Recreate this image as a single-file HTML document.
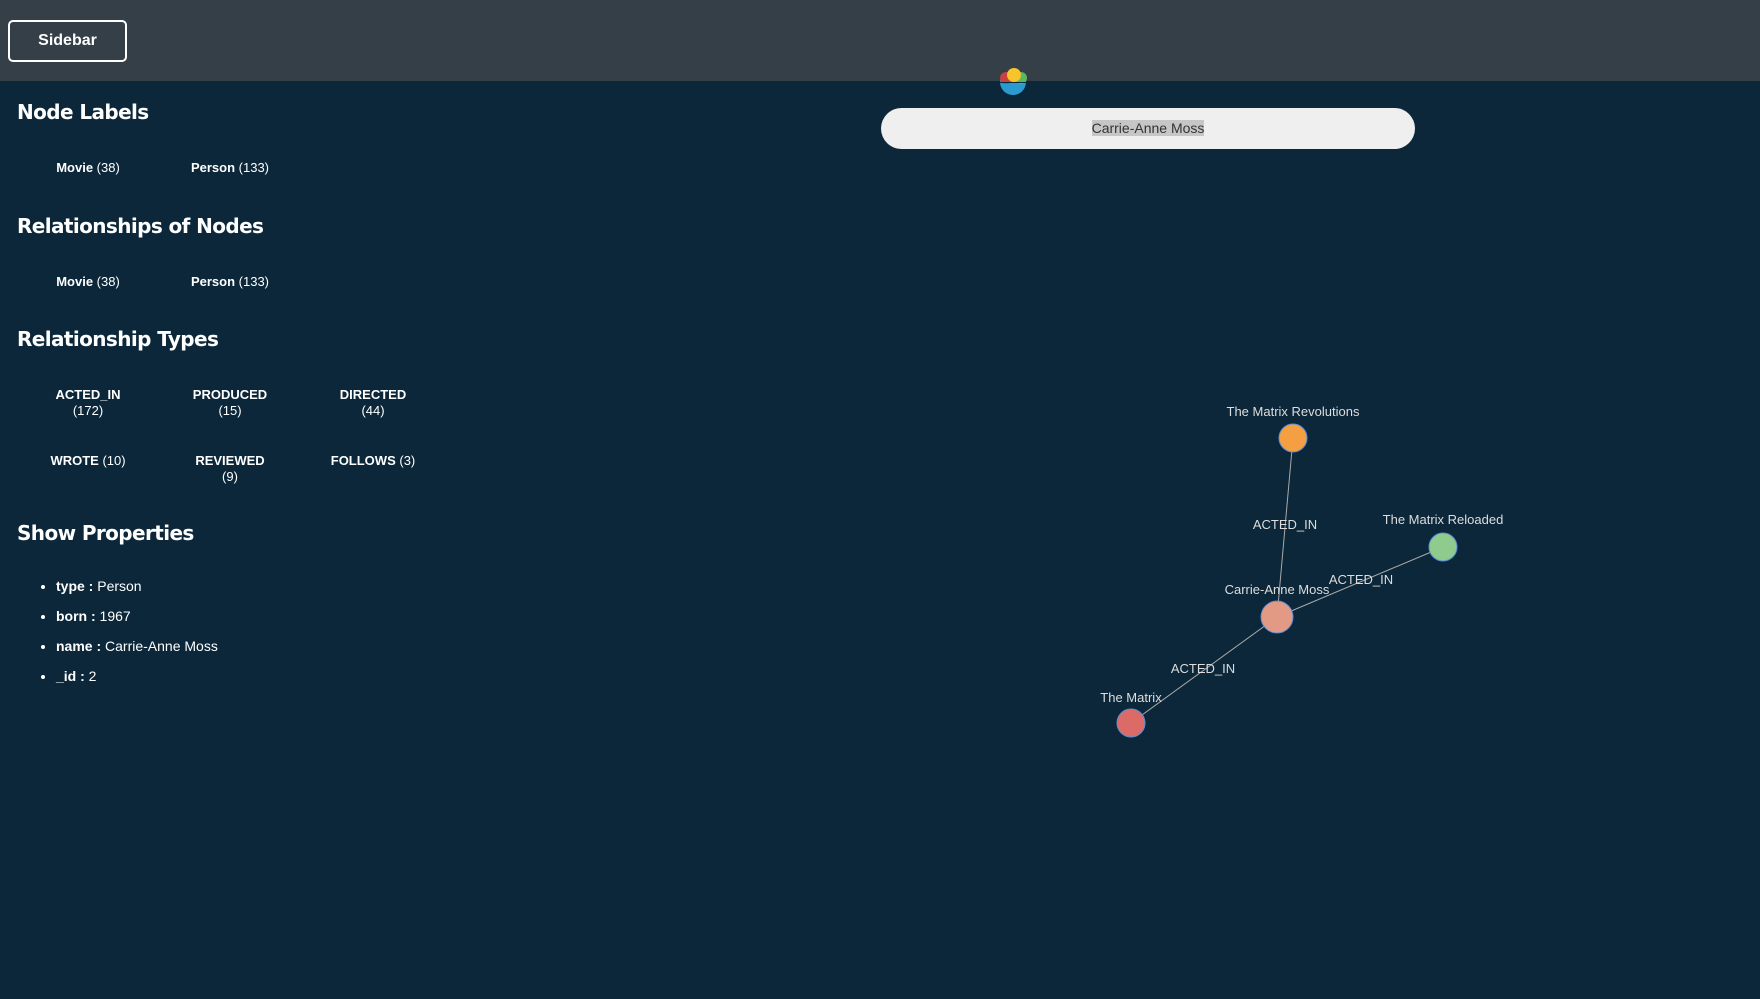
<!DOCTYPE html>
<html><head><meta charset="utf-8"><style>
body{margin:0;width:1760px;height:999px;background:#0b2739;font-family:"Liberation Sans",sans-serif;color:#fff;position:relative;overflow:hidden}
.hdr{position:absolute;left:0;top:0;width:1760px;height:81px;background:#343f48}
.btn{position:absolute;left:8px;top:20px;width:115px;height:38px;border:2px solid #fff;border-radius:5px;font-weight:bold;font-size:16px;line-height:38px;text-align:center}
h2{position:absolute;left:17px;margin:0;font-size:20px;font-weight:bold;font-family:"DejaVu Sans","Liberation Sans",sans-serif;letter-spacing:-0.6px}
.c{position:absolute;width:140px;text-align:center;font-size:13px;font-weight:bold;line-height:16px}
.c span{font-weight:normal}
ul{position:absolute;left:38px;top:571px;margin:0;padding-left:18px;font-size:14px;line-height:30px}
.search{position:absolute;left:881px;top:108px;width:534px;height:41px;border-radius:21px;background:#efefef;text-align:center;line-height:41px;font-size:14px;color:#333}
.search span{background:#c6c6c6}
</style></head><body>
<div class="hdr"></div>
<div class="btn">Sidebar</div>
<svg style="position:absolute;left:998px;top:66px" width="30" height="32">
<circle cx="15" cy="16" r="13" fill="#2a9ad0"/>
<rect x="0" y="0" width="30" height="14" fill="#343f48"/>
<circle cx="8" cy="12" r="6" fill="#c8413f"/>
<circle cx="23" cy="12" r="6" fill="#5cb85c"/>
<circle cx="16" cy="9" r="7" fill="#f7c52b"/>
<rect x="2" y="16" width="26" height="1" fill="#0b2739"/>
</svg>
<h2 style="top:100px">Node Labels</h2>
<div class="c" style="left:18px;top:160px">Movie <span>(38)</span></div>
<div class="c" style="left:160px;top:160px">Person <span>(133)</span></div>
<h2 style="top:214px">Relationships of Nodes</h2>
<div class="c" style="left:18px;top:274px">Movie <span>(38)</span></div>
<div class="c" style="left:160px;top:274px">Person <span>(133)</span></div>
<h2 style="top:327px">Relationship Types</h2>
<div class="c" style="left:18px;top:387px">ACTED_IN<br><span>(172)</span></div>
<div class="c" style="left:160px;top:387px">PRODUCED<br><span>(15)</span></div>
<div class="c" style="left:303px;top:387px">DIRECTED<br><span>(44)</span></div>
<div class="c" style="left:18px;top:453px">WROTE <span>(10)</span></div>
<div class="c" style="left:160px;top:453px">REVIEWED<br><span>(9)</span></div>
<div class="c" style="left:303px;top:453px">FOLLOWS <span>(3)</span></div>
<h2 style="top:521px">Show Properties</h2>
<ul>
<li><b>type :</b> Person</li>
<li><b>born :</b> 1967</li>
<li><b>name :</b> Carrie-Anne Moss</li>
<li><b>_id :</b> 2</li>
</ul>
<div class="search"><span>Carrie-Anne Moss</span></div>
<svg style="position:absolute;left:0;top:0" width="1760" height="999" font-family="Liberation Sans, sans-serif" font-size="13" fill="#ddd" text-anchor="middle">
<g stroke="#aaa" stroke-width="1">
<line x1="1277" y1="617" x2="1293" y2="438"/>
<line x1="1277" y1="617" x2="1443" y2="547"/>
<line x1="1277" y1="617" x2="1131" y2="723"/>
</g>
<text x="1285" y="529">ACTED_IN</text>
<text x="1361" y="584">ACTED_IN</text>
<text x="1203" y="673">ACTED_IN</text>
<circle cx="1293" cy="438" r="14" fill="#f4a042" stroke="#5a8fd8" stroke-width="1"/>
<circle cx="1443" cy="547" r="14" fill="#8fcb8c" stroke="#5a8fd8" stroke-width="1"/>
<circle cx="1277" cy="617" r="16" fill="#e39a85" stroke="#5a8fd8" stroke-width="1"/>
<circle cx="1131" cy="723" r="14" fill="#dc6a66" stroke="#5a8fd8" stroke-width="1"/>
<text x="1293" y="416">The Matrix Revolutions</text>
<text x="1443" y="524">The Matrix Reloaded</text>
<text x="1277" y="594">Carrie-Anne Moss</text>
<text x="1131" y="702">The Matrix</text>
</svg>
</body></html>
